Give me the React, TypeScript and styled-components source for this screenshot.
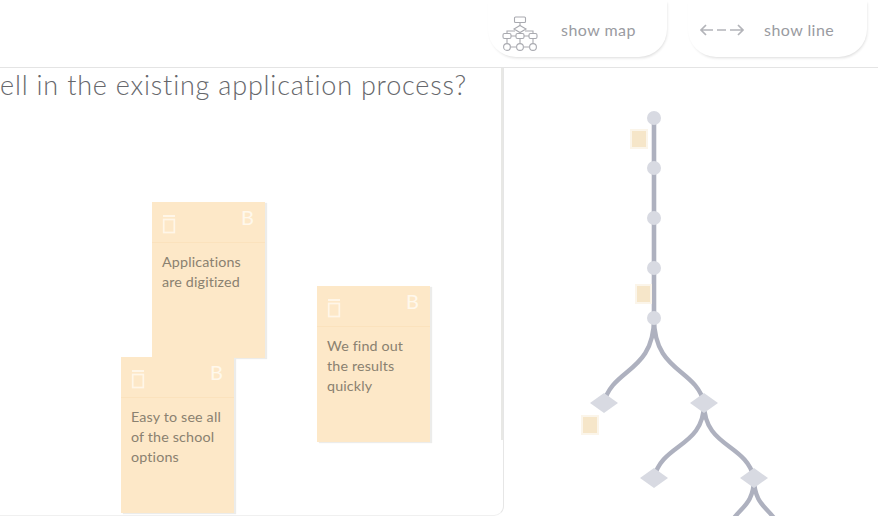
import React from 'react';
import styled, { createGlobalStyle } from 'styled-components';

const GlobalStyle = createGlobalStyle`
  html, body {
    margin: 0;
    padding: 0;
    background: #fff;
    overflow: hidden;
  }
  body {
    font-family: Lato, "Open Sans", sans-serif;
  }
`;

const Page = styled.div`
  width: 878px;
  height: 516px;
  display: flex;
  flex-direction: column;
  overflow: hidden;
`;

const Toolbar = styled.header`
  height: 67px;
  flex: none;
  display: flex;
  justify-content: flex-end;
  gap: 21px;
  padding-right: 11px;
  border-bottom: 1px solid #e4e4e4;
`;

const ToolButton = styled.button<{ $width: number; $gap: number; $pad: number }>`
  width: ${(p) => p.$width}px;
  height: 57px;
  display: flex;
  align-items: center;
  gap: ${(p) => p.$gap}px;
  padding: 2px 0 0 ${(p) => p.$pad}px;
  box-sizing: border-box;
  background: #fff;
  border: 0;
  border-radius: 0 0 28px 28px;
  box-shadow: 1px 2px 3px -1px #dcdcdc;
  font: 400 16px Lato, sans-serif;
  letter-spacing: 0.45px;
  color: #9a9ba1;

  svg {
    position: relative;
    top: ${(p) => (p.$pad > 12 ? 4 : 0)}px;
  }
`;

const Workspace = styled.main`
  flex: 1;
  display: flex;
  min-height: 0;
`;

const Board = styled.section`
  position: relative;
  width: 504px;
  flex: none;
  box-sizing: border-box;
  border-right: 1px solid #e6e6e6;
  border-bottom: 1px solid #f0f0f0;
  border-radius: 0 0 10px 0;
  overflow: hidden;
`;

const ScrollThumb = styled.div`
  position: absolute;
  top: 0;
  right: 0;
  width: 2px;
  height: 372px;
  background: #e8e8e5;
`;

const Question = styled.h1`
  margin: 0;
  font-size: 27px;
  line-height: 34px;
  font-weight: 300;
  letter-spacing: 0.8px;
  color: #66676b;
  white-space: nowrap;
`;

const Note = styled.article<{ $x: number; $y: number }>`
  position: absolute;
  left: ${(p) => p.$x}px;
  top: ${(p) => p.$y}px;
  width: 113px;
  height: 156px;
  background: #fde8c8;
  box-shadow: 2px 1px 1px #ececea;
`;

const NoteHeader = styled.div`
  height: 41px;
  box-sizing: border-box;
  display: flex;
  justify-content: space-between;
  padding: 4px 11px 0 10px;
  border-bottom: 1px solid #fbe2bd;
`;

const BoldMark = styled.span`
  font-size: 20px;
  line-height: 22px;
  color: #fff8ec;
`;

const NoteText = styled.p`
  margin: 0;
  padding: 9px 10px 0;
  font-size: 14.3px;
  line-height: 20px;
  font-weight: 400;
  letter-spacing: 0.15px;
  color: #8a8170;
`;

const MapPanel = styled.section`
  position: relative;
  flex: 1;
  overflow: hidden;
`;

const MapSvg = styled.svg`
  display: block;
  width: 374px;
  height: 448px;
`;

const MiniNote = styled.div<{ $x: number; $y: number; $w: number }>`
  position: absolute;
  left: ${(p) => p.$x}px;
  top: ${(p) => p.$y}px;
  width: ${(p) => p.$w}px;
  height: 16px;
  background: #f6e6c9;
  box-shadow: 0 0 0 2px #fbf5ea;
`;

const TrashIcon = () => (
  <svg width="14" height="20" viewBox="0 0 14 20" fill="none" stroke="#fff6e8" strokeWidth="1.7" style={{ marginTop: 8 }}>
    <path d="M1 2h12" strokeWidth="2" />
    <rect x="1.7" y="5.5" width="10.6" height="13" />
  </svg>
);

const MapIcon = () => (
  <svg width="36" height="36" viewBox="0 0 36 36" fill="#fff" stroke="#a9aab0" strokeWidth="1.1">
    <path d="M18 6v5M5 22v6M18 22v6M31 22v6M5 18v-3h8M23 15h8v3M9 20h5M22 20h5M9 31h5M22 31h5" fill="none" />
    <rect x="12.5" y="1" width="11" height="5.5" rx="1" />
    <path d="M18 9.5l6 3.5-6 3.5-6-3.5z" />
    <rect x="1" y="17.5" width="8" height="5" rx="1.5" />
    <rect x="14" y="17.5" width="8" height="5" rx="1.5" />
    <rect x="27" y="17.5" width="8" height="5" rx="1.5" />
    <circle cx="5" cy="31" r="3.4" />
    <circle cx="18" cy="31" r="3.4" />
    <circle cx="31" cy="31" r="3.4" />
  </svg>
);

const LineIcon = () => (
  <svg width="46" height="14" viewBox="0 0 46 14" fill="none" stroke="#b3b4b9" strokeWidth="1.7">
    <path d="M7 2L2 7l5 5M2 7h12M18 7h9M31 7h13M39 2l5 5-5 5" />
  </svg>
);

const notes = [
  { x: 152, y: 134, lines: ['Applications', 'are digitized'] },
  { x: 317, y: 218, lines: ['We find out', 'the results', 'quickly'] },
  { x: 121, y: 289, lines: ['Easy to see all', 'of the school', 'options'] },
];

const circles = [50, 100, 150, 200, 250];
const diamonds = [
  [100, 335],
  [200, 335],
  [150, 410],
  [250, 410],
];
const branches = [
  'M150 250C150 305 108 300 100 335',
  'M150 250C150 305 192 300 200 335',
  'M200 335C200 380 158 375 150 410',
  'M200 335C200 380 242 375 250 410',
  'M250 410C250 440 232 440 224 460',
  'M250 410C250 440 268 440 276 460',
];

export default function App() {
  return (
    <Page>
      <GlobalStyle />
      <Toolbar>
        <ToolButton $width={179} $gap={23} $pad={14}>
          <MapIcon />
          show map
        </ToolButton>
        <ToolButton $width={179} $gap={19} $pad={11}>
          <LineIcon />
          show line
        </ToolButton>
      </Toolbar>
      <Workspace>
        <Board>
          <Question>ell in the existing application process?</Question>
          <ScrollThumb />
          {notes.map((note) => (
            <Note key={note.x} $x={note.x} $y={note.y}>
              <NoteHeader>
                <TrashIcon />
                <BoldMark>B</BoldMark>
              </NoteHeader>
              <NoteText>
                {note.lines.map((line) => (
                  <React.Fragment key={line}>
                    {line}
                    <br />
                  </React.Fragment>
                ))}
              </NoteText>
            </Note>
          ))}
        </Board>
        <MapPanel>
          <MapSvg viewBox="0 0 374 448">
            <path d="M150 50V250" stroke="#aeb1bf" strokeWidth="4.6" fill="none" />
            {branches.map((d) => (
              <path key={d} d={d} stroke="#aeb1bf" strokeWidth="4.4" fill="none" />
            ))}
            {circles.map((cy) => (
              <circle key={cy} cx="150" cy={cy} r="7" fill="#d8dae2" />
            ))}
            {diamonds.map(([x, y]) => (
              <path key={`${x}-${y}`} d={`M${x - 14} ${y}L${x} ${y - 10}L${x + 14} ${y}L${x} ${y + 10}Z`} fill="#d8dae2" />
            ))}
          </MapSvg>
          <MiniNote $x={128} $y={63} $w={14} />
          <MiniNote $x={133} $y={218} $w={13} />
          <MiniNote $x={79} $y={349} $w={14} />
        </MapPanel>
      </Workspace>
    </Page>
  );
}
